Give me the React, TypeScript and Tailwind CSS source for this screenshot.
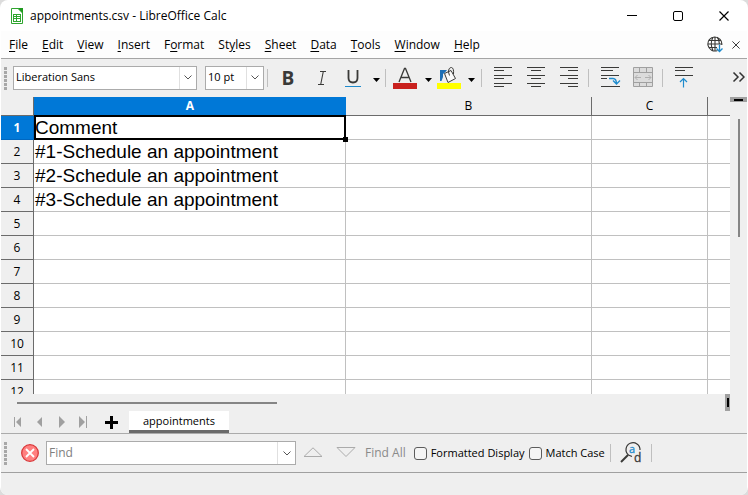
import { useState } from 'react';
import type { ReactNode } from 'react';

const menus: [string, string, string][] = [
  ['', 'F', 'ile'],
  ['', 'E', 'dit'],
  ['', 'V', 'iew'],
  ['', 'I', 'nsert'],
  ['F', 'o', 'rmat'],
  ['St', 'y', 'les'],
  ['', 'S', 'heet'],
  ['', 'D', 'ata'],
  ['', 'T', 'ools'],
  ['', 'W', 'indow'],
  ['', 'H', 'elp'],
];

const rows = [
  'Comment',
  '#1-Schedule an appointment',
  '#2-Schedule an appointment',
  '#3-Schedule an appointment',
  '', '', '', '', '', '', '', '',
];

function CalcIcon() {
  return (
    <svg width="14" height="18" viewBox="0 0 14 18" className="shrink-0" aria-hidden="true">
      <path d="M1.500 1.500H8L12.500 6V16.500H1.500Z" fill="#fff" stroke="#2fa52f" />
      <path d="M7.500 1H13V6.500Z" fill="#1f9a1f" />
      <rect x="3" y="7" width="8" height="8" fill="#2fa52f" />
      <path d="M4 8h2v1H4zM7 8h3v1H7zM4 10h2v1H4zM7 10h3v1H7zM4 12h2v2H4zM7 12h3v2H7z" fill="#fff" />
    </svg>
  );
}

function Cross({ size, color }: { size: number; color: string }) {
  return (
    <svg width={size} height={size} viewBox="0 0 10 10" aria-hidden="true">
      <path d="M.5.5l9 9M9.500.5l-9 9" stroke={color} strokeWidth="1.200" fill="none" />
    </svg>
  );
}

function Chevron() {
  return (
    <svg width="8" height="5" viewBox="0 0 8 5" aria-hidden="true">
      <path d="M.5.5L4 4 7.500.5" fill="none" stroke="#555" />
    </svg>
  );
}

function Grip() {
  return (
    <svg width="4" height="24" viewBox="0 0 4 24" className="ml-[3px] shrink-0" aria-hidden="true">
      {[0, 4, 8, 12, 16, 20].map((y) => (
        <rect key={y} x="0" y={y + 1} width="3" height="3" fill="#a8a8a8" />
      ))}
    </svg>
  );
}

function Separator() {
  return <span className="h-[18px] w-px shrink-0 bg-[#bfbfbf]" />;
}

function ToolButton({ label, className, children }: { label: string; className: string; children: ReactNode }) {
  return (
    <button type="button" aria-label={label} className={`flex h-7 shrink-0 items-center justify-center ${className}`}>
      {children}
    </button>
  );
}

function DropArrow() {
  return (
    <svg width="7" height="4" viewBox="0 0 7 4" className="mt-1" aria-hidden="true">
      <path d="M0 0H7L3.500 4Z" fill="#000" />
    </svg>
  );
}

function Combo({ label, value, className }: { label: string; value: string; className: string }) {
  return (
    <div className={`relative h-6 shrink-0 ${className}`}>
      <select aria-label={label} className="h-full w-full appearance-none border border-[#ababab] bg-white pl-[2px] text-[11px] text-black">
        <option>{value}</option>
      </select>
      <span className="pointer-events-none absolute inset-y-px right-px flex w-[17px] items-center justify-center border-l border-[#e0e0e0]">
        <Chevron />
      </span>
    </div>
  );
}

function Lines({ spans }: { spans: [number, number][] }) {
  return (
    <svg width="20" height="22" viewBox="0 0 20 22" aria-hidden="true">
      {spans.map(([x, w], i) => (
        <rect key={i} x={x} y={[0, 3, 8, 11, 16, 19][i]} width={w} height="1" fill="#3a3a38" />
      ))}
    </svg>
  );
}

function Toolbar() {
  return (
    <div className="flex h-[38px] shrink-0 items-center overflow-hidden border-t border-[#a5a5a5] bg-[#efefef]">
      <div className="w-3 shrink-0"><Grip /></div>
      <Combo label="Font name" value="Liberation Sans" className="w-[184px]" />
      <Combo label="Font size" value="10 pt" className="ml-2 mr-[3px] w-[59px]" />
      <Separator />
      <ToolButton label="Bold" className="w-10">
        <span className="text-[19px] leading-6 font-bold text-[#3a3a38]">B</span>
      </ToolButton>
      <ToolButton label="Italic" className="w-7">
        <svg width="10" height="16" viewBox="0 0 10 16" aria-hidden="true">
          <path d="M3 1.500H9M1 14.500H7M6.300 1.500L3.700 14.500" stroke="#3a3a38" strokeWidth="1.100" fill="none" />
        </svg>
      </ToolButton>
      <ToolButton label="Underline" className="w-[33px]">
        <svg width="16" height="18" viewBox="0 0 16 18" aria-hidden="true">
          <path d="M3.500 1V9Q3.500 13.500 8 13.500T12.500 9V1" stroke="#3a3a38" strokeWidth="1.800" fill="none" />
          <rect y="17" width="16" height="1" fill="#1e8bcd" />
        </svg>
      </ToolButton>
      <ToolButton label="Underline styles" className="mr-[2px] w-[14px]"><DropArrow /></ToolButton>
      <Separator />
      <ToolButton label="Font color" className="ml-1 w-[30px]">
        <svg width="24" height="22" viewBox="0 0 24 22" aria-hidden="true">
          <path d="M6 15L11.500 1.500H12.500L18 15M8 10.500H16" stroke="#3a3a38" strokeWidth="1.300" fill="none" />
          <rect y="16" width="24" height="6" fill="#c9211e" />
        </svg>
      </ToolButton>
      <ToolButton label="Font color list" className="w-4"><DropArrow /></ToolButton>
      <ToolButton label="Background color" className="w-[26px]">
        <svg width="24" height="22" viewBox="0 0 24 22" aria-hidden="true">
          <path d="M3 14V3H10L8 5.500L6 7V10L4.500 14Z" fill="#1e6fb5" />
          <path d="M7.500 6.500L14 3.500L18.500 11.500L11 15.500Z" fill="#fafafa" stroke="#3a3a38" />
          <path d="M12.500 8.500L11.500 5Q11.500 .5 14.500 .5Q17 1 16.500 7" fill="none" stroke="#3a3a38" />
          <rect y="16" width="24" height="6" fill="#ff0" />
        </svg>
      </ToolButton>
      <ToolButton label="Background color list" className="w-[19px]"><DropArrow /></ToolButton>
      <Separator />
      <ToolButton label="Align left" className="ml-1 w-[33px]">
        <Lines spans={[[1, 18], [1, 10], [1, 18], [1, 10], [1, 18], [1, 10]]} />
      </ToolButton>
      <ToolButton label="Align center" className="w-[33px]">
        <Lines spans={[[1, 18], [5, 10], [1, 18], [5, 10], [1, 18], [5, 10]]} />
      </ToolButton>
      <ToolButton label="Align right" className="mr-[3px] w-[33px]">
        <Lines spans={[[1, 18], [9, 10], [1, 18], [9, 10], [1, 18], [9, 10]]} />
      </ToolButton>
      <Separator />
      <ToolButton label="Wrap text" className="ml-[6px] w-8">
        <svg width="20" height="22" viewBox="0 0 20 22" aria-hidden="true">
          <path d="M0 .5H18M0 3.500H12M0 8.500H18M0 11.500H6M0 19.500H19" stroke="#3a3a38" fill="none" />
          <path d="M8 11.500H12Q15.500 11.500 15.500 17M12 13.500L15.500 17L19 13.500" stroke="#1e8bcd" strokeWidth="1.300" fill="none" />
        </svg>
      </ToolButton>
      <ToolButton label="Merge and center cells" className="mr-[3px] w-8">
        <svg width="20" height="22" viewBox="0 0 20 22" aria-hidden="true">
          <path d="M.5.5H19.500V19.500H.5ZM.5 5.500H19.500M.5 15.500H19.500M6.500.5V5.500M13.500.5V5.500M6.500 15.500V19.500M13.500 15.500V19.500" fill="#dcdcdc" stroke="#a0a0a0" />
          <path d="M2 10.500H8M12 10.500H18M4.500 8L2 10.500L4.500 13M15.500 8L18 10.500L15.500 13" fill="none" stroke="#b0b0b0" />
        </svg>
      </ToolButton>
      <Separator />
      <ToolButton label="Align top" className="ml-[5px] w-8">
        <svg width="18" height="22" viewBox="0 0 18 22" aria-hidden="true">
          <path d="M0 .5H18M0 3.500H10M0 8.500H18" stroke="#3a3a38" fill="none" />
          <path d="M8.500 20.500V11.500M5 15L8.500 11.500L12 15" stroke="#1e8bcd" strokeWidth="1.200" fill="none" />
        </svg>
      </ToolButton>
      <ToolButton label="More tools" className="ml-auto mr-px w-4">
        <svg width="13" height="12" viewBox="0 0 13 12" aria-hidden="true">
          <path d="M1.500.5L6 5L1.500 9.500M7.500.5L12 5L7.500 9.500" fill="none" stroke="#333" strokeWidth="1.500" />
        </svg>
      </ToolButton>
    </div>
  );
}

function Grid() {
  const colHead = 'border-r border-b border-[#6b6b6b] p-0 text-center font-normal';
  return (
    <div className="flex min-h-0 flex-1">
      <div className="min-w-0 flex-1 overflow-hidden bg-white">
        <table className="w-full table-fixed border-separate border-spacing-0">
          <colgroup>
            <col className="w-[33px]" />
            <col className="w-[312px]" />
            <col className="w-[246px]" />
            <col className="w-[116px]" />
            <col />
          </colgroup>
          <thead>
            <tr className="h-[19px] bg-[#efefef] text-[12px] leading-[18px]">
              <th className={colHead} aria-label="Select all" />
              <th scope="col" className="border-b border-[#0067c0] bg-[#0078d7] p-0 text-center font-bold text-white">A</th>
              <th scope="col" className={colHead}>B</th>
              <th scope="col" className={colHead}>C</th>
              <th className="border-b border-[#6b6b6b] p-0" aria-label="D" />
            </tr>
          </thead>
          <tbody>
            {rows.map((text, i) => (
              <tr key={i} className="h-6">
                <th
                  scope="row"
                  className={
                    i === 0
                      ? 'border-r border-b border-[#0067c0] bg-[#0078d7] p-0 text-center text-[12px] leading-[18px] font-bold text-white'
                      : 'border-r border-b border-[#6b6b6b] bg-[#efefef] p-0 text-center text-[12px] leading-[18px] font-normal'
                  }
                >
                  {i + 1}
                </th>
                <td className="relative border-r border-b border-[#c0c0c0] p-0 pt-px pl-px font-['Liberation_Sans',sans-serif] text-[19px] leading-[22px] whitespace-nowrap">
                  {text}
                  {i === 0 && (
                    <>
                      <span className="absolute -top-px -right-px -bottom-px left-0 border-2 border-black" />
                      <span className="absolute -right-[3px] -bottom-[3px] z-10 size-[5px] bg-black" />
                    </>
                  )}
                </td>
                <td className="border-r border-b border-[#c0c0c0] p-0" />
                <td className="border-r border-b border-[#c0c0c0] p-0" />
                <td className="border-b border-[#c0c0c0] p-0" />
              </tr>
            ))}
          </tbody>
        </table>
      </div>
      <div className="flex w-[17px] shrink-0 flex-col items-center bg-[#efefef]">
        <div className="flex h-[5px] w-full items-center justify-center bg-[#a0a0a0]">
          <span className="h-[2px] w-[9px] bg-black" />
        </div>
        <div className="mt-[17px] h-[118px] w-[2px] bg-[#858585]" />
      </div>
    </div>
  );
}

function NavButton({ label, children }: { label: string; children: ReactNode }) {
  return (
    <button type="button" aria-label={label} className="flex h-5 w-[22px] items-center justify-center">
      <svg width="9" height="12" viewBox="0 0 9 12" aria-hidden="true">{children}</svg>
    </button>
  );
}

function SheetTabs() {
  return (
    <div className="shrink-0 bg-[#efefef]">
      <div className="flex h-[17px] items-center">
        <div className="ml-4 flex-1">
          <div className="h-[2px] w-[260px] bg-[#858585]" />
        </div>
        <div className="mr-[17px] flex h-[17px] w-[5px] items-center justify-center bg-[#a0a0a0]">
          <span className="h-[9px] w-[2px] bg-black" />
        </div>
      </div>
      <div className="flex h-[22px] items-center pl-[5px]">
        <NavButton label="First sheet"><path d="M1 1h1v10H1zM8 1v10L3 6z" fill="#a0a0a0" /></NavButton>
        <NavButton label="Previous sheet"><path d="M7 1v10L2 6z" fill="#a0a0a0" /></NavButton>
        <NavButton label="Next sheet"><path d="M2 0v12L8 6z" fill="#a0a0a0" /></NavButton>
        <NavButton label="Last sheet"><path d="M0 0v12L6 6zM7 0h1v12H7z" fill="#a0a0a0" /></NavButton>
        <button type="button" aria-label="Add sheet" className="flex h-5 w-[35px] items-center justify-center">
          <svg width="13" height="13" viewBox="0 0 13 13" aria-hidden="true">
            <path d="M5 0h3v5h5v3H8v5H5V8H0V5h5z" fill="#000" />
          </svg>
        </button>
        <button type="button" className="h-[22px] border-b-[3px] border-[#6b6b6b] bg-white px-[14px] text-[11px] leading-[19px]">appointments</button>
      </div>
    </div>
  );
}

function Check({ id, label }: { id: string; label: string }) {
  const [on, setOn] = useState(false);
  return (
    <div className="flex shrink-0 items-center gap-1">
      <input
        id={id}
        type="checkbox"
        checked={on}
        onChange={(e) => setOn(e.target.checked)}
        className="size-[13px] appearance-none rounded-[3px] border border-[#5c5c5c] bg-[#f5f5f5] checked:bg-[#0078d7]"
      />
      <label htmlFor={id} className="whitespace-nowrap">{label}</label>
    </div>
  );
}

function FindBar() {
  return (
    <div className="flex h-[39px] shrink-0 items-center overflow-hidden border-t border-[#ababab] bg-[#efefef] text-[11px]">
      <div className="w-3 shrink-0"><Grip /></div>
      <button type="button" aria-label="Close find bar" className="flex h-6 w-[33px] shrink-0 items-center justify-center">
        <svg width="18" height="18" viewBox="0 0 18 18" aria-hidden="true">
          <circle cx="9" cy="9" r="8.300" fill="#ff8080" stroke="#d9383a" strokeWidth="1.300" />
          <path d="M5 5L13 13M13 5L5 13" stroke="#fff" strokeWidth="1.800" />
        </svg>
      </button>
      <div className="flex h-6 w-[250px] shrink-0 border border-[#ababab] bg-white">
        <input aria-label="Find" placeholder="Find" className="min-w-0 flex-1 pl-[2px] text-[12px] outline-none placeholder:text-[#808080]" />
        <button type="button" aria-label="Search history" className="flex w-[18px] items-center justify-center border-l border-[#e0e0e0]"><Chevron /></button>
      </div>
      <ToolButton label="Find previous" className="w-[34px]">
        <svg width="20" height="12" viewBox="0 0 20 12" aria-hidden="true"><path d="M1 9.500L10 .8L19 9.500Z" fill="none" stroke="#ababab" /></svg>
      </ToolButton>
      <ToolButton label="Find next" className="w-8">
        <svg width="20" height="12" viewBox="0 0 20 12" aria-hidden="true"><path d="M1 .5L10 9.500L19 .5Z" fill="none" stroke="#ababab" /></svg>
      </ToolButton>
      <button type="button" className="mr-2 ml-[3px] shrink-0 text-[12px] text-[#8a8a8a]">Find All</button>
      <div className="mr-[5px] flex shrink-0 gap-1">
        <Check id="formatted" label="Formatted Display" />
        <Check id="matchcase" label="Match Case" />
      </div>
      <Separator />
      <ToolButton label="Find and replace" className="w-10">
        <svg width="22" height="26" viewBox="0 -1 22 26" aria-hidden="true">
          <path d="M1 21L8 14" stroke="#3a3a38" strokeWidth="2" />
          <path d="M12 15.500L8.500 14A7 7 0 1 1 20 9" fill="none" stroke="#3a3a38" strokeWidth="1.200" />
          <text x="9" y="12" fontSize="11" fill="#1e8bcd" stroke="#1e8bcd" strokeWidth=".3">a</text>
          <text x="14" y="21" fontSize="12" fill="#3a3a38" stroke="#3a3a38" strokeWidth=".3">d</text>
        </svg>
      </ToolButton>
      <Separator />
    </div>
  );
}

export default function App() {
  return (
    <div className="h-screen bg-[#dcdcdc] font-['Open_Sans',sans-serif] text-[12px] text-black">
      <div className="flex h-full flex-col overflow-hidden rounded-lg bg-white px-px">
        <header className="flex h-[31px] shrink-0 items-center pl-[9px]">
          <CalcIcon />
          <h1 className="ml-[6px] flex-1 whitespace-nowrap">appointments.csv - LibreOffice Calc</h1>
          <button type="button" aria-label="Minimize" className="flex h-full w-[46px] items-center justify-center">
            <span className="h-px w-[10px] bg-black" />
          </button>
          <button type="button" aria-label="Maximize" className="flex h-full w-[46px] items-center justify-center">
            <span className="size-[10px] rounded-[2px] border border-black" />
          </button>
          <button type="button" aria-label="Close" className="flex h-full w-[46px] items-center justify-center">
            <Cross size={10} color="#000" />
          </button>
        </header>
        <div className="flex h-[27px] shrink-0 items-center bg-[#fdfdfd] pl-2">
          <nav className="flex flex-1 gap-[14px]">
            {menus.map(([a, u, b]) => (
              <button key={a + u + b} type="button" className="whitespace-nowrap">
                {a}<span className="underline underline-offset-2">{u}</span>{b}
              </button>
            ))}
          </nav>
          <button type="button" aria-label="Check for updates" className="mr-2">
            <svg width="17" height="17" viewBox="0 0 17 17" aria-hidden="true">
              <path d="M10.500 14.500A7 7 0 1 1 14.800 9M8 .7V15M6 1.200Q2.500 7.500 6 14.500M10 1.200Q12.500 4 12.300 8M2 4.500H14M1 8H15M2 11.500H10" fill="none" stroke="#3a3a38" strokeWidth="1.100" />
              <path d="M12.500 8.500V15.500M9.500 12.500L12.500 15.500L15.500 12.500" fill="none" stroke="#1e8bcd" strokeWidth="1.300" />
            </svg>
          </button>
          <button type="button" aria-label="Close document" className="mr-[7px]"><Cross size={8} color="#333" /></button>
        </div>
        <Toolbar />
        <div className="h-px shrink-0 bg-[#efefef]" />
        <Grid />
        <SheetTabs />
        <FindBar />
        <footer className="h-[23px] shrink-0 border-t border-[#a0a0a0] bg-[#efefef]" />
      </div>
    </div>
  );
}
